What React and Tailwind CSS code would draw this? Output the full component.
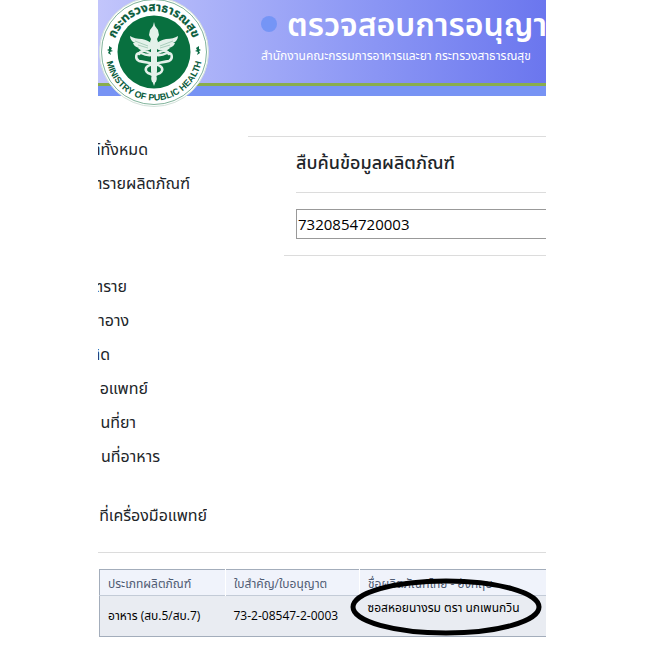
const menu = [
  {
    id: "products",
    className: "",
    items: [
      { label: "ฑ์ทั้งหมด", width: "w-[50px]" },
      { label: "ตรายผลิตภัณฑ์", width: "w-[92px]" },
    ],
  },
  {
    id: "categories",
    className: "mt-[69px]",
    items: [
      { label: "ตราย", width: "w-[29px]" },
      { label: "าอาง", width: "w-[31px]" },
      { label: "ติด", width: "w-[12px]" },
      { label: "อแพทย์", width: "w-[50px]" },
      { label: "นที่ยา", width: "w-[38px]" },
      { label: "นที่อาหาร", width: "w-[62px]" },
    ],
  },
  {
    id: "devices",
    className: "mt-[25px]",
    items: [{ label: "ที่เครื่องมือแพทย์", width: "w-[109px]" }],
  },
];

function Emblem() {
  return (
    <svg viewBox="0 0 112 112" className="absolute -top-1 left-0 size-28" role="img" aria-label="Ministry of Public Health">
      <defs>
        <path id="arc-top" d="M 15 56 A 41 41 0 0 1 97 56" />
        <path id="arc-bottom" d="M 7.500 56 A 48.500 48.500 0 0 0 104.500 56" />
      </defs>
      <circle cx="56" cy="56" r="54.500" fill="#fff" stroke="#d3e2da" strokeWidth="1" />
      <circle cx="56" cy="56" r="52.500" fill="none" stroke="#5f9f80" strokeWidth=".8" />
      <circle cx="56" cy="56" r="36.500" fill="#08703f" />
      <text fontSize="12" fontWeight="700" fill="#0a5c3c" stroke="#0a5c3c" strokeWidth=".2" textAnchor="middle">
        <textPath href="#arc-top" startOffset="50%">กระทรวงสาธารณสุข</textPath>
      </text>
      <text fontFamily="Liberation Sans" fontSize="9" fontWeight="700" fill="#0a5c3c" textAnchor="middle">
        <textPath href="#arc-bottom" startOffset="50%">MINISTRY OF PUBLIC HEALTH</textPath>
      </text>
      <g fill="#0b6b45">
        <path d="M11 50l3 2-1 2 2 1-3 1 1 3-3-2 1-2-2-1 2-1z" />
        <path d="M101 50l-3 2 1 2-2 1 3 1-1 3 3-2-1-2 2-1-2-1z" />
      </g>
      {/* wings */}
      <g fill="#e4f1ea">
        <path d="M54 48c-3-3-6-4-10-5-5 0-9-1-12-3 0 3 2 6 5 7h-2c1 3 3 4 6 5h-1c2 2 4 3 7 2 3 1 5 0 7-2z" />
        <path d="M58 48c3-3 6-4 10-5 5 0 9-1 12-3 0 3-2 6-5 7h2c-1 3-3 4-6 5h1c-2 2-4 3-7 2-3 1-5 0-7-2z" />
      </g>
      <g fill="none" stroke="#7fb69b" strokeWidth=".6">
        <path d="M37 45l13 5M40 49l10 3M75 45l-13 5M72 49l-10 3" />
      </g>
      {/* staff */}
      <path d="M56 26l1 4 3 4 1 5-2 4 1 3-1 7v22l-1 9-2 6-2-6-1-9V53l-1-7 1-3-2-4 1-5 3-4z" fill="#e4f1ea" />
      {/* snakes */}
      <g fill="none" stroke="#e4f1ea" strokeWidth="2.500" strokeLinecap="round">
        <path d="M41 58c3-5 7-3 11-1 6 3 11 3 17 0 6-1 6 6 2 8-5 1-11 2-16 3-8 2-9 6-5 9 5 2 9 3 7 8" />
        <path d="M71 58c-3-5-7-3-11-1-6 3-11 3-17 0-6-1-6 6-2 8 5 1 11 2 16 3 8 2 9 6 5 9-5 2-9 3-7 8" />
      </g>
    </svg>
  );
}

function Header() {
  return (
    <header className="relative h-24 border-b-[10px] border-[#7793f4] bg-linear-to-r from-[#c2c5fb] to-[#6b76ee]">
      <div className="h-[86px] overflow-hidden border-b-[3px] border-[#89ad4c] pl-[163px] text-white">
        <div className="flex h-12 items-center gap-2.5">
          <span className="size-4 shrink-0 rounded-full bg-[#7595f6]" />
          <h1 className="text-[32px] font-semibold whitespace-nowrap">ตรวจสอบการอนุญาต</h1>
        </div>
        <p className="text-xs leading-4 whitespace-nowrap">สำนักงานคณะกรรมการอาหารและยา กระทรวงสาธารณสุข</p>
      </div>
      <Emblem />
    </header>
  );
}

function SideMenu() {
  return (
    <nav className="w-[150px] shrink-0 pt-9">
      {menu.map((group) => (
        <ul key={group.id} className={group.className}>
          {group.items.map((item) => (
            <li key={item.label} className={`${item.width} flex justify-end overflow-hidden`}>
              <a href="#" className="text-base leading-[34px] whitespace-nowrap text-[#212529]">
                {item.label}
              </a>
            </li>
          ))}
        </ul>
      ))}
    </nav>
  );
}

function SearchPanel() {
  return (
    <section className="min-w-0 flex-1 pt-10">
      <div className="border-t border-[#dcdcdc] pl-12">
        <label htmlFor="keyword" className="block border-b border-[#dcdcdc] pb-1 text-lg leading-[51px] font-medium whitespace-nowrap text-[#212529]">
          สืบค้นข้อมูลผลิตภัณฑ์
        </label>
        <input
          id="keyword"
          type="text"
          defaultValue="7320854720003"
          className="mt-4 block h-[30px] w-full border border-r-0 border-[#999] px-px font-['Open_Sans'] text-[15px] text-black"
        />
      </div>
      <hr className="mt-4 ml-9 border-[#dcdcdc]" />
    </section>
  );
}

function ResultTable() {
  return (
    <div className="relative ml-px">
      <table className="w-full table-fixed border-y border-l border-[#a3adbb] text-left text-xs whitespace-nowrap">
        <thead>
          <tr className="h-[26px] border-b border-[#c3cbd7] bg-[#f0f3fb] text-[#4f5b73]">
            <th className="w-[126px] border-r border-white pt-0.5 pl-2 font-normal">ประเภทผลิตภัณฑ์</th>
            <th className="w-[134px] border-r border-white pt-0.5 pl-2 font-normal">ใบสำคัญ/ใบอนุญาต</th>
            <th className="pt-0.5 pl-2 font-normal">ชื่อผลิตภัณฑ์ไทย - อังกฤษ</th>
          </tr>
        </thead>
        <tbody>
          <tr className="h-[41px] bg-[#e9ecf2] text-black">
            <td className="pl-2">อาหาร (สบ.5/สบ.7)</td>
            <td className="pl-2">73-2-08547-2-0003</td>
            <td className="pb-4 pl-2">ซอสหอยนางรม ตรา นกเพนกวิน</td>
          </tr>
        </tbody>
      </table>
      <svg viewBox="0 0 192 60" className="absolute top-2 right-1 h-[60px] w-48" aria-hidden="true">
        <ellipse cx="96" cy="30" rx="93" ry="26" fill="none" stroke="#000" strokeWidth="5" />
      </svg>
    </div>
  );
}

export default function App() {
  return (
    <div className="min-h-screen bg-white pr-[99px] pl-[98px] font-['Open_Sans','Noto_Sans_Thai','Noto_Sans',sans-serif]">
      <Header />
      <main>
        <div className="flex">
          <SideMenu />
          <SearchPanel />
        </div>
        <hr className="mt-5 mb-4 border-[#dcdcdc]" />
        <ResultTable />
      </main>
    </div>
  );
}
